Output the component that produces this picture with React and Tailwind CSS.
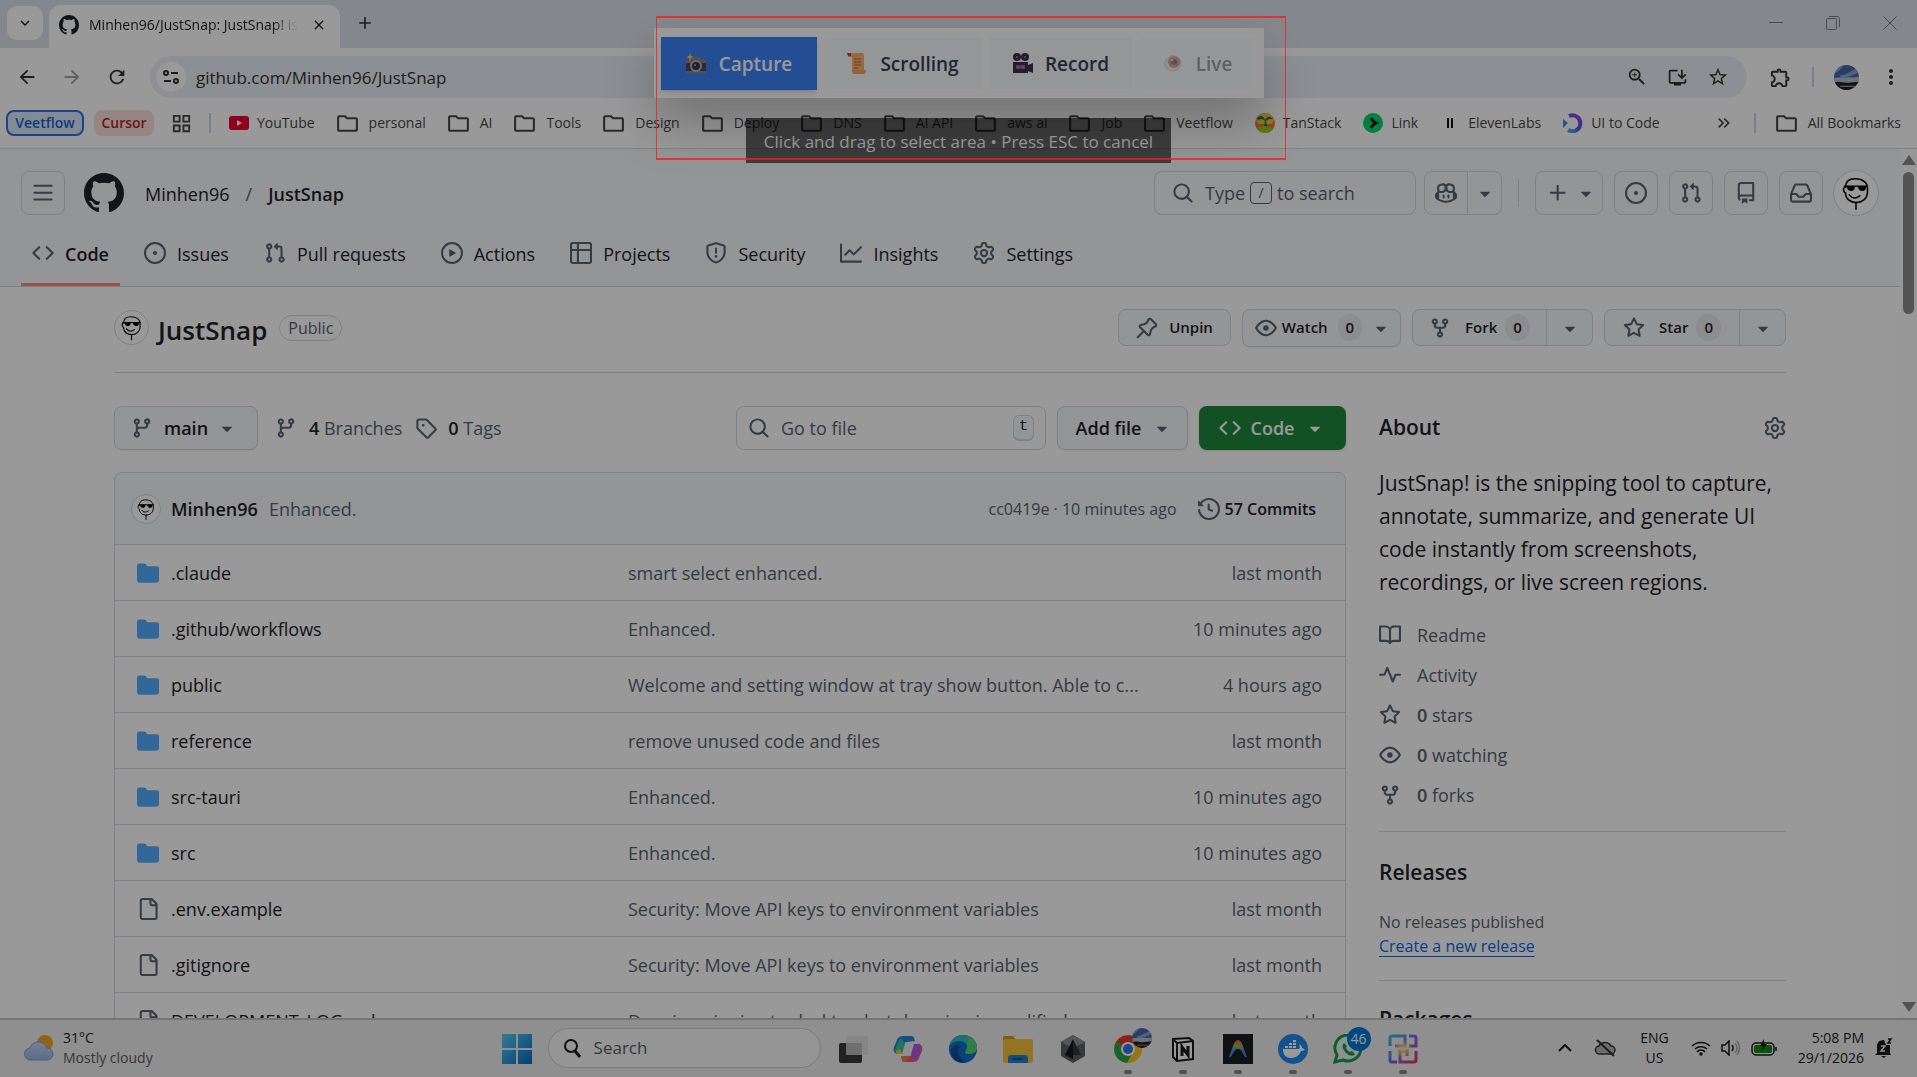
import {
  MdAdd,
  MdArrowBack,
  MdArrowForward,
  MdClose,
  MdExpandMore,
  MdGridView,
  MdInstallDesktop,
  MdKeyboardDoubleArrowRight,
  MdMoreVert,
  MdOutlineExtension,
  MdOutlineFolder,
  MdRefresh,
  MdStarBorder,
  MdZoomIn,
} from 'react-icons/md'

const paths = {
  code: 'm11.28 3.22 4.25 4.25a.75.75 0 0 1 0 1.06l-4.25 4.25a.749.749 0 0 1-1.275-.326.749.749 0 0 1 .215-.734L13.94 8l-3.72-3.72a.749.749 0 0 1 .326-1.275.749.749 0 0 1 .734.215Zm-6.56 0a.751.751 0 0 1 1.042.018.751.751 0 0 1 .018 1.042L2.06 8l3.72 3.72a.749.749 0 0 1-.326 1.275.749.749 0 0 1-.734-.215L.47 8.53a.75.75 0 0 1 0-1.06Z',
  issue: 'M8 9.5a1.5 1.5 0 1 0 0-3 1.5 1.5 0 0 0 0 3ZM8 0a8 8 0 1 1 0 16A8 8 0 0 1 8 0ZM1.5 8a6.5 6.5 0 1 0 13 0 6.5 6.5 0 0 0-13 0Z',
  pull: 'M1.5 3.25a2.25 2.25 0 1 1 3 2.122v5.256a2.251 2.251 0 1 1-1.5 0V5.372A2.25 2.25 0 0 1 1.5 3.25Zm5.677-.177L9.573.677A.25.25 0 0 1 10 .854V2.5h1A2.5 2.5 0 0 1 13.5 5v5.628a2.251 2.251 0 1 1-1.5 0V5a1 1 0 0 0-1-1h-1v1.646a.25.25 0 0 1-.427.177L7.177 3.427a.25.25 0 0 1 0-.354ZM3.75 2.5a.75.75 0 1 0 0 1.5.75.75 0 0 0 0-1.5Zm0 9.5a.75.75 0 1 0 0 1.5.75.75 0 0 0 0-1.5Zm8.25.75a.75.75 0 1 0 1.5 0 .75.75 0 0 0-1.5 0Z',
  play: 'M8 0a8 8 0 1 1 0 16A8 8 0 0 1 8 0ZM1.5 8a6.5 6.5 0 1 0 13 0 6.5 6.5 0 0 0-13 0Zm4.879-2.773 4.264 2.559a.25.25 0 0 1 0 .428l-4.264 2.559A.25.25 0 0 1 6 10.559V5.442a.25.25 0 0 1 .379-.215Z',
  table: 'M0 1.75C0 .784.784 0 1.75 0h12.5C15.216 0 16 .784 16 1.75v12.5A1.75 1.75 0 0 1 14.25 16H1.75A1.75 1.75 0 0 1 0 14.25ZM6.5 6.5v8h7.75a.25.25 0 0 0 .25-.25V6.5Zm8-1.5V1.75a.25.25 0 0 0-.25-.25H6.5V5Zm-13 1.5v7.75c0 .138.112.25.25.25H5v-8ZM5 5V1.5H1.75a.25.25 0 0 0-.25.25V5Z',
  shield: 'M8.533.133a1.75 1.75 0 0 0-1.066 0l-5.25 1.68A1.75 1.75 0 0 0 1 3.48V7c0 1.566.32 3.182 1.303 4.682.983 1.498 2.585 2.813 5.032 3.855a1.697 1.697 0 0 0 1.33 0c2.447-1.042 4.049-2.357 5.032-3.855C14.68 10.182 15 8.566 15 7V3.48a1.75 1.75 0 0 0-1.217-1.667Zm-.61 1.429a.25.25 0 0 1 .153 0l5.25 1.68a.25.25 0 0 1 .174.238V7c0 1.358-.275 2.666-1.057 3.86-.784 1.194-2.121 2.34-4.366 3.297a.196.196 0 0 1-.154 0c-2.245-.956-3.582-2.104-4.366-3.298C2.775 9.666 2.5 8.36 2.5 7V3.48a.25.25 0 0 1 .174-.237ZM8.75 4.75v3a.75.75 0 0 1-1.5 0v-3a.75.75 0 0 1 1.5 0ZM9 10.5a1 1 0 1 1-2 0 1 1 0 0 1 2 0Z',
  graph: 'M1.5 1.75V13.5h13.75a.75.75 0 0 1 0 1.5H.75a.75.75 0 0 1-.75-.75V1.75a.75.75 0 0 1 1.5 0Zm14.28 2.53-5.25 5.25a.75.75 0 0 1-1.06 0L7 7.06 4.28 9.78a.751.751 0 0 1-1.042-.018.751.751 0 0 1-.018-1.042l3.25-3.25a.75.75 0 0 1 1.06 0L10 7.94l4.72-4.72a.751.751 0 0 1 1.042.018.751.751 0 0 1 .018 1.042Z',
  gear: 'M8 0a8.2 8.2 0 0 1 .701.031C9.444.095 9.99.645 10.16 1.29l.288 1.107c.018.066.079.158.212.224.231.114.454.243.668.386.123.082.233.09.299.071l1.103-.303c.644-.176 1.392.021 1.82.63.27.385.506.792.704 1.218.315.675.111 1.422-.364 1.891l-.814.806c-.049.048-.098.147-.088.294.016.257.016.515 0 .772-.01.147.038.246.088.294l.814.806c.475.469.679 1.216.364 1.891a7.977 7.977 0 0 1-.704 1.217c-.428.61-1.176.807-1.82.63l-1.102-.302c-.067-.019-.177-.011-.3.071a5.909 5.909 0 0 1-.668.386c-.133.066-.194.158-.211.224l-.29 1.106c-.168.646-.715 1.196-1.458 1.26a8.006 8.006 0 0 1-1.402 0c-.743-.064-1.289-.614-1.458-1.26l-.289-1.106c-.018-.066-.079-.158-.212-.224a5.738 5.738 0 0 1-.668-.386c-.123-.082-.233-.09-.299-.071l-1.103.303c-.644.176-1.392-.021-1.82-.63a8.12 8.12 0 0 1-.704-1.218c-.315-.675-.111-1.422.363-1.891l.815-.806c.05-.048.098-.147.088-.294a6.214 6.214 0 0 1 0-.772c.01-.147-.038-.246-.088-.294l-.815-.806C.635 6.045.431 5.298.746 4.623a7.92 7.92 0 0 1 .704-1.217c.428-.61 1.176-.807 1.82-.63l1.102.302c.067.019.177.011.3-.071.214-.143.437-.272.668-.386.133-.066.194-.158.211-.224l.29-1.106C6.009.645 6.556.095 7.299.03 7.53.01 7.764 0 8 0Zm-.571 1.525c-.036.003-.108.036-.137.146l-.289 1.105c-.147.561-.549.967-.998 1.189-.173.086-.34.183-.5.29-.417.278-.97.423-1.529.27l-1.103-.303c-.109-.03-.175.016-.195.045-.22.312-.412.644-.573.99-.014.031-.021.11.059.19l.815.806c.411.406.562.957.53 1.456a4.709 4.709 0 0 0 0 .582c.032.499-.119 1.05-.53 1.456l-.815.806c-.081.08-.073.159-.059.19.162.346.353.677.573.989.02.03.085.076.195.046l1.102-.303c.56-.153 1.113-.008 1.53.27.161.107.328.204.501.29.447.222.85.629.997 1.189l.289 1.105c.029.109.101.143.137.146a6.6 6.6 0 0 0 1.142 0c.036-.003.108-.036.137-.146l.289-1.105c.147-.561.549-.967.998-1.189.173-.086.34-.183.5-.29.417-.278.97-.423 1.529-.27l1.103.303c.109.029.175-.016.195-.045.22-.313.411-.644.573-.99.014-.031.021-.11-.059-.19l-.815-.806c-.411-.406-.562-.957-.53-1.456a4.709 4.709 0 0 0 0-.582c-.032-.499.119-1.05.53-1.456l.815-.806c.081-.08.073-.159.059-.19a6.464 6.464 0 0 0-.573-.989c-.02-.03-.085-.076-.195-.046l-1.102.303c-.56.153-1.113.008-1.53-.27a4.44 4.44 0 0 0-.501-.29c-.447-.222-.85-.629-.997-1.189l-.289-1.105c-.029-.11-.101-.143-.137-.146a6.6 6.6 0 0 0-1.142 0ZM11 8a3 3 0 1 1-6 0 3 3 0 0 1 6 0ZM9.5 8a1.5 1.5 0 1 0-3.001.001A1.5 1.5 0 0 0 9.5 8Z',
  github: 'M8 0c4.42 0 8 3.58 8 8a8.013 8.013 0 0 1-5.45 7.59c-.4.08-.55-.17-.55-.38 0-.27.01-1.13.01-2.2 0-.75-.25-1.23-.54-1.48 1.78-.2 3.65-.88 3.65-3.95 0-.88-.31-1.59-.82-2.15.08-.2.36-1.02-.08-2.12 0 0-.67-.22-2.2.82-.64-.18-1.32-.27-2-.27-.68 0-1.36.09-2 .27-1.53-1.03-2.2-.82-2.2-.82-.44 1.1-.16 1.92-.08 2.12-.51.56-.82 1.28-.82 2.15 0 3.06 1.86 3.75 3.64 3.95-.23.2-.44.55-.51 1.07-.46.21-1.61.55-2.33-.66-.15-.24-.6-.83-1.23-.82-.67.01-.27.38.01.53.34.19.73.9.82 1.13.16.45.68 1.31 2.69.94 0 .67.01 1.3.01 1.49 0 .21-.15.45-.55.38A7.995 7.995 0 0 1 0 8c0-4.42 3.58-8 8-8Z',
  search: 'M10.68 11.74a6 6 0 0 1-7.922-8.982 6 6 0 0 1 8.982 7.922l3.04 3.04a.749.749 0 0 1-.326 1.275.749.749 0 0 1-.734-.215ZM11.5 7a4.499 4.499 0 1 0-8.997 0A4.499 4.499 0 0 0 11.5 7Z',
  copilot: 'M7.998 15.035c-4.562 0-7.873-2.914-7.998-3.749V9.338c.085-.628.677-1.686 1.588-2.065.013-.07.024-.143.036-.218.029-.183.06-.384.126-.612-.201-.508-.254-1.084-.254-1.656 0-.87.128-1.769.693-2.484.579-.733 1.494-1.124 2.724-1.261 1.206-.134 2.262.034 2.944.765.05.053.096.108.139.165.044-.057.094-.112.143-.165.682-.731 1.738-.899 2.944-.765 1.23.137 2.145.528 2.724 1.261.566.715.693 1.614.693 2.484 0 .572-.053 1.148-.254 1.656.066.228.098.429.126.612.012.076.024.148.037.218.924.385 1.522 1.471 1.591 2.095v1.872c0 .766-3.351 3.795-8.002 3.795Zm0-1.485c2.28 0 4.584-1.11 5.002-1.433V7.862l-.023-.116c-.49.21-1.075.291-1.727.291-1.146 0-2.059-.327-2.71-.991A3.222 3.222 0 0 1 8 6.303a3.24 3.24 0 0 1-.544.743c-.65.664-1.563.991-2.71.991-.652 0-1.236-.081-1.727-.291l-.023.116v4.255c.419.323 2.722 1.433 5.002 1.433ZM6.762 2.83c-.193-.206-.637-.413-1.682-.297-1.019.113-1.479.404-1.713.7-.247.312-.369.789-.369 1.554 0 .793.129 1.171.308 1.371.162.181.519.379 1.442.379.853 0 1.339-.235 1.638-.54.315-.322.527-.827.617-1.553.117-.935-.037-1.395-.241-1.614Zm4.155-.297c-1.044-.116-1.488.091-1.681.297-.204.219-.359.679-.242 1.614.091.726.303 1.231.618 1.553.299.305.784.54 1.638.54.922 0 1.28-.198 1.442-.379.179-.2.308-.578.308-1.371 0-.765-.123-1.242-.37-1.554-.233-.296-.693-.587-1.713-.7ZM6.25 9.037a.75.75 0 0 1 .75.75v1.501a.75.75 0 0 1-1.5 0V9.787a.75.75 0 0 1 .75-.75Zm4.25.75v1.501a.75.75 0 0 1-1.5 0V9.787a.75.75 0 0 1 1.5 0Z',
  caret: 'm4.427 7.427 3.396 3.396a.25.25 0 0 0 .354 0l3.396-3.396A.25.25 0 0 0 11.396 7H4.604a.25.25 0 0 0-.177.427Z',
  plus: 'M7.75 2a.75.75 0 0 1 .75.75V7h4.25a.75.75 0 0 1 0 1.5H8.5v4.25a.75.75 0 0 1-1.5 0V8.5H2.75a.75.75 0 0 1 0-1.5H7V2.75A.75.75 0 0 1 7.75 2Z',
  menu: 'M1 2.75A.75.75 0 0 1 1.75 2h12.5a.75.75 0 0 1 0 1.5H1.75A.75.75 0 0 1 1 2.75Zm0 5A.75.75 0 0 1 1.75 7h12.5a.75.75 0 0 1 0 1.5H1.75A.75.75 0 0 1 1 7.75ZM1.75 12h12.5a.75.75 0 0 1 0 1.5H1.75a.75.75 0 0 1 0-1.5Z',
  repo: 'M2 2.5A2.5 2.5 0 0 1 4.5 0h8.75a.75.75 0 0 1 .75.75v12.5a.75.75 0 0 1-.75.75h-2.5a.75.75 0 0 1 0-1.5h1.75v-2h-8a1 1 0 0 0-.714 1.7.75.75 0 1 1-1.072 1.05A2.495 2.495 0 0 1 2 11.5Zm10.5-1h-8a1 1 0 0 0-1 1v6.708A2.486 2.486 0 0 1 4.5 9h8ZM5 12.25a.25.25 0 0 1 .25-.25h3.5a.25.25 0 0 1 .25.25v3.25a.25.25 0 0 1-.4.2l-1.45-1.087a.249.249 0 0 0-.3 0L5.4 15.7a.25.25 0 0 1-.4-.2Z',
  inbox: 'M2.8 2.06A1.75 1.75 0 0 1 4.41 1h7.18c.7 0 1.333.417 1.61 1.06l2.74 6.395c.04.093.06.194.06.295v4.5A1.75 1.75 0 0 1 14.25 15H1.75A1.75 1.75 0 0 1 0 13.25v-4.5c0-.101.02-.202.06-.295Zm1.61.44a.25.25 0 0 0-.23.152L1.887 8H4.75a.75.75 0 0 1 .6.3L6.625 10h2.75l1.275-1.7a.75.75 0 0 1 .6-.3h2.863L11.82 2.652a.25.25 0 0 0-.23-.152Zm10.09 7h-2.875l-1.275 1.7a.75.75 0 0 1-.6.3h-3.5a.75.75 0 0 1-.6-.3L4.375 9.5H1.5v3.75c0 .138.112.25.25.25h12.5a.25.25 0 0 0 .25-.25Z',
  pin: 'm11.294.984 3.722 3.722a1.75 1.75 0 0 1-.504 2.826l-1.327.613a3.089 3.089 0 0 0-1.707 2.084l-.584 2.454c-.317 1.332-1.972 1.8-2.94.832L5.75 11.311 1.78 15.28a.749.749 0 1 1-1.06-1.06l3.969-3.97-2.204-2.204c-.968-.968-.5-2.623.832-2.94l2.454-.584a3.08 3.08 0 0 0 2.084-1.707l.613-1.327a1.75 1.75 0 0 1 2.826-.504ZM6.283 9.723l2.732 2.731a.25.25 0 0 0 .42-.119l.584-2.454a4.586 4.586 0 0 1 2.537-3.098l1.328-.613a.25.25 0 0 0 .072-.404l-3.722-3.722a.25.25 0 0 0-.404.072l-.613 1.328a4.584 4.584 0 0 1-3.098 2.537l-2.454.584a.25.25 0 0 0-.119.42l2.731 2.732Z',
  eye: 'M8 2c1.981 0 3.671.992 4.933 2.078 1.27 1.091 2.187 2.345 2.637 3.023a1.62 1.62 0 0 1 0 1.798c-.45.678-1.367 1.932-2.637 3.023C11.67 13.008 9.981 14 8 14c-1.981 0-3.671-.992-4.933-2.078C1.797 10.83.88 9.576.43 8.898a1.62 1.62 0 0 1 0-1.798c.45-.677 1.367-1.931 2.637-3.022C4.33 2.992 6.019 2 8 2ZM1.679 7.932a.12.12 0 0 0 0 .136c.411.622 1.241 1.75 2.366 2.717C5.176 11.758 6.527 12.5 8 12.5c1.473 0 2.825-.742 3.955-1.715 1.124-.967 1.954-2.096 2.366-2.717a.12.12 0 0 0 0-.136c-.412-.621-1.242-1.75-2.366-2.717C10.824 4.242 9.473 3.5 8 3.5c-1.473 0-2.825.742-3.955 1.715-1.124.967-1.954 2.096-2.366 2.717ZM8 10a2 2 0 1 1-.001-3.999A2 2 0 0 1 8 10Z',
  fork: 'M5 5.372v.878c0 .414.336.75.75.75h4.5a.75.75 0 0 0 .75-.75v-.878a2.25 2.25 0 1 1 1.5 0v.878a2.25 2.25 0 0 1-2.25 2.25h-1.5v2.128a2.251 2.251 0 1 1-1.5 0V8.5h-1.5A2.25 2.25 0 0 1 3.5 6.25v-.878a2.25 2.25 0 1 1 1.5 0ZM5 3.25a.75.75 0 1 0-1.5 0 .75.75 0 0 0 1.5 0Zm6.75.75a.75.75 0 1 0 0-1.5.75.75 0 0 0 0 1.5Zm-3 8.75a.75.75 0 1 0-1.5 0 .75.75 0 0 0 1.5 0Z',
  star: 'M8 .25a.75.75 0 0 1 .673.418l1.882 3.815 4.21.612a.75.75 0 0 1 .416 1.279l-3.046 2.97.719 4.192a.751.751 0 0 1-1.088.791L8 12.347l-3.766 1.98a.75.75 0 0 1-1.088-.79l.72-4.194L.818 6.374a.75.75 0 0 1 .416-1.28l4.21-.611L7.327.668A.75.75 0 0 1 8 .25Zm0 2.445L6.615 5.5a.75.75 0 0 1-.564.41l-3.097.45 2.24 2.184a.75.75 0 0 1 .216.664l-.528 3.084 2.769-1.456a.75.75 0 0 1 .698 0l2.77 1.456-.53-3.084a.75.75 0 0 1 .216-.664l2.24-2.183-3.096-.45a.75.75 0 0 1-.564-.41L8 2.694Z',
  branch: 'M9.5 3.25a2.25 2.25 0 1 1 3 2.122V6A2.5 2.5 0 0 1 10 8.5H6a1 1 0 0 0-1 1v1.128a2.251 2.251 0 1 1-1.5 0V5.372a2.25 2.25 0 1 1 1.5 0v1.836A2.493 2.493 0 0 1 6 7h4a1 1 0 0 0 1-1v-.628A2.25 2.25 0 0 1 9.5 3.25Zm-6 0a.75.75 0 1 0 1.5 0 .75.75 0 0 0-1.5 0Zm8.25-.75a.75.75 0 1 0 0 1.5.75.75 0 0 0 0-1.5ZM4.25 12a.75.75 0 1 0 0 1.5.75.75 0 0 0 0-1.5Z',
  tag: 'M1 7.775V2.75C1 1.784 1.784 1 2.75 1h5.025c.464 0 .91.184 1.238.513l6.25 6.25a1.75 1.75 0 0 1 0 2.474l-5.026 5.026a1.75 1.75 0 0 1-2.474 0l-6.25-6.25A1.752 1.752 0 0 1 1 7.775Zm1.5 0c0 .066.026.13.073.177l6.25 6.25a.25.25 0 0 0 .354 0l5.025-5.025a.25.25 0 0 0 0-.354l-6.25-6.25a.25.25 0 0 0-.177-.073H2.75a.25.25 0 0 0-.25.25ZM6 5a1 1 0 1 1 0 2 1 1 0 0 1 0-2Z',
  folder: 'M1.75 1A1.75 1.75 0 0 0 0 2.75v10.5C0 14.216.784 15 1.75 15h12.5A1.75 1.75 0 0 0 16 13.25v-8.5A1.75 1.75 0 0 0 14.25 3H7.5a.25.25 0 0 1-.2-.1l-.9-1.2C6.07 1.26 5.55 1 5 1H1.75Z',
  file: 'M2 1.75C2 .784 2.784 0 3.75 0h6.586c.464 0 .909.184 1.237.513l2.914 2.914c.329.328.513.773.513 1.237v9.586A1.75 1.75 0 0 1 13.25 16h-9.5A1.75 1.75 0 0 1 2 14.25Zm1.75-.25a.25.25 0 0 0-.25.25v12.5c0 .138.112.25.25.25h9.5a.25.25 0 0 0 .25-.25V6h-2.75A1.75 1.75 0 0 1 9 4.25V1.5Zm6.75.062V4.25c0 .138.112.25.25.25h2.688l-.011-.013-2.914-2.914-.013-.011Z',
  history: 'm.427 1.927 1.215 1.215a8.002 8.002 0 1 1-1.6 5.685.75.75 0 1 1 1.493-.154 6.5 6.5 0 1 0 1.18-4.458l1.358 1.358A.25.25 0 0 1 3.896 6H.25A.25.25 0 0 1 0 5.75V2.104a.25.25 0 0 1 .427-.177ZM7.75 4a.75.75 0 0 1 .75.75v2.992l2.028.812a.75.75 0 0 1-.557 1.392l-2.5-1A.751.751 0 0 1 7 8.25v-3.5A.75.75 0 0 1 7.75 4Z',
  book: 'M0 1.75A.75.75 0 0 1 .75 1h4.253c1.227 0 2.317.59 3 1.501A3.743 3.743 0 0 1 11.006 1h4.245a.75.75 0 0 1 .75.75v10.5a.75.75 0 0 1-.75.75h-4.507a2.25 2.25 0 0 0-1.591.659l-.622.621a.75.75 0 0 1-1.06 0l-.622-.621A2.25 2.25 0 0 0 5.258 13H.75a.75.75 0 0 1-.75-.75Zm7.251 10.324.004-5.073-.002-2.253A2.25 2.25 0 0 0 5.003 2.5H1.5v9h3.757a3.75 3.75 0 0 1 1.994.574ZM8.755 4.75l-.004 7.322a3.752 3.752 0 0 1 1.992-.572H14.5v-9h-3.495a2.25 2.25 0 0 0-2.25 2.25Z',
  pulse: 'M6 2c.306 0 .582.187.696.471L10 10.731l1.304-3.26A.751.751 0 0 1 12 7h3.25a.75.75 0 0 1 0 1.5h-2.742l-1.812 4.528a.751.751 0 0 1-1.392 0L6 4.77 4.696 8.03A.75.75 0 0 1 4 8.5H.75a.75.75 0 0 1 0-1.5h2.742l1.812-4.529A.751.751 0 0 1 6 2Z',
}

function Icon({ name, className = 'size-[22px] text-[#59636e]' }) {
  return (
    <svg viewBox="0 0 16 16" fill="currentColor" fillRule="evenodd" aria-hidden="true" className={`shrink-0 ${className}`}>
      <path d={paths[name]} />
    </svg>
  )
}

function Avatar({ className }) {
  return (
    <span className={`flex shrink-0 rounded-full border border-[#d1d9e0] bg-white ${className}`}>
      <svg viewBox="0 0 46 46" fill="none" stroke="#000" strokeWidth="1.6" strokeLinecap="round" className="size-full">
        <path d="M12 17c0-6 4-9 10-9 8 0 13 4 13 10v4c0 7-6 11-12 11s-11-4-11-10c-2-1-3-4-1-6ZM23 33v7M16 25c3 4 7 4 11 1" />
        <path d="M11 16h24" />
        <path d="M13 16h9c0 4-2 5-4 5s-4-1-5-5ZM25 16h9c-1 4-2 5-4 5s-5-1-5-5Z" fill="#000" stroke="none" />
      </svg>
    </span>
  )
}

function SkyPhoto({ className }) {
  return (
    <svg viewBox="0 0 24 24" aria-hidden="true" className={`shrink-0 rounded-full ${className}`}>
      <rect width="24" height="24" fill="#4468ac" />
      <path d="M0 8c5-1 6-5 10-8H0ZM6 10c6-1 10-4 16-7l2 4c-6 3-12 5-18 6Z" fill="#8ba3cd" />
      <path d="M0 13c3-2 6 0 9-1 5-1 10 1 15-1v8H0Z" fill="#b5bfd2" />
      <path d="M0 17c4-2 8 0 12 0s8-1 12-1v8H0Z" fill="#25211f" />
      <path d="M6 20h15v1H6Z" fill="#9b9792" />
    </svg>
  )
}

/* ---------- browser window ---------- */

function TabStrip() {
  return (
    <div className="flex h-12 items-end bg-[#dde3ea] text-[#1f1f1f]">
      <button aria-label="Search tabs" className="mb-2 ml-[7px] flex h-[34px] w-9 items-center justify-center rounded-[10px] bg-white">
        <MdExpandMore className="size-[18px]" />
      </button>
      <div className="ml-[6px] flex h-[43px] w-[291px] items-center rounded-t-xl bg-white px-[10px] pb-1">
        <Icon name="github" className="size-5 text-[#1f2328]" />
        <span className="ml-[10px] w-[209px] overflow-hidden text-sm whitespace-nowrap [mask-image:linear-gradient(to_right,#000_88%,transparent)]">
          Minhen96/JustSnap: JustSnap! is
        </span>
        <button aria-label="Close tab" className="ml-[13px]">
          <MdClose className="size-4" />
        </button>
      </div>
      <button aria-label="New tab" className="mb-[15px] ml-[15px]">
        <MdAdd className="size-5 text-[#333]" />
      </button>
      <div className="mr-5 mb-[18px] ml-auto flex gap-[43px] text-[#7c8085]">
        <button aria-label="Minimize">
          <svg viewBox="0 0 14 14" className="size-[14px]" fill="none" stroke="currentColor"><path d="M0 6.5h14" /></svg>
        </button>
        <button aria-label="Restore">
          <svg viewBox="0 0 14 14" className="size-[14px]" fill="none" stroke="currentColor"><rect x=".5" y="2.500" width="10" height="11" rx="1" /><path d="M3 .5h8a2.500 2.500 0 0 1 2.500 2.500v8" /></svg>
        </button>
        <button aria-label="Close">
          <svg viewBox="0 0 14 14" className="size-[14px]" fill="none" stroke="currentColor"><path d="m.5.5 13 13M13.500.5l-13 13" /></svg>
        </button>
      </div>
    </div>
  )
}

function AddressBar() {
  return (
    <div className="flex h-[58px] items-center bg-white pr-[14px] pl-4 text-[#333]">
      <button aria-label="Back"><MdArrowBack className="size-[22px]" /></button>
      <button aria-label="Forward" className="ml-[23px]"><MdArrowForward className="size-[22px] text-[#a0a0a0]" /></button>
      <button aria-label="Reload" className="ml-[23px]"><MdRefresh className="size-[22px]" /></button>
      <div className="ml-[22px] flex h-[42px] flex-1 items-center rounded-full bg-[#e9eef6] pr-[18px] pl-[6px]">
        <button aria-label="Site information" className="flex size-[30px] items-center justify-center rounded-full bg-white">
          <svg viewBox="0 0 16 16" className="size-4" fill="none" stroke="currentColor" strokeWidth="2">
            <circle cx="3" cy="4" r="2" /><path d="M8 4h7M1 12h7" /><circle cx="13" cy="12" r="2" />
          </svg>
        </button>
        <input aria-label="Address" defaultValue="github.com/Minhen96/JustSnap" className="ml-[10px] min-w-0 flex-1 bg-transparent pt-[2px] text-[17px] outline-none" />
        <div className="flex items-center gap-[19px]">
          <button aria-label="Zoom"><MdZoomIn className="size-[22px]" /></button>
          <button aria-label="Install app"><MdInstallDesktop className="size-[21px]" /></button>
          <button aria-label="Bookmark this page"><MdStarBorder className="size-[22px]" /></button>
        </div>
      </div>
      <button aria-label="Extensions" className="ml-[22px]"><MdOutlineExtension className="size-[23px]" /></button>
      <span className="ml-5 h-5 w-[2px] bg-[#c7d6ec]" />
      <button aria-label="Profile" className="ml-5"><SkyPhoto className="size-[25px]" /></button>
      <button aria-label="Menu" className="ml-5"><MdMoreVert className="size-6" /></button>
    </div>
  )
}

const bookmarkIcons = {
  folder: <MdOutlineFolder className="mr-[1px] -ml-[2px] size-[25px] shrink-0 text-[#474747]" />,
  youtube: (
    <svg viewBox="0 0 20 20" className="size-5"><rect y="3" width="20" height="14" rx="3" fill="#f00033" /><path d="m8 7 5 3-5 3Z" fill="#fff" /></svg>
  ),
  tanstack: (
    <svg viewBox="0 0 20 20" className="size-5">
      <circle cx="10" cy="10" r="10" fill="#ee7a2c" />
      <path d="M1 6a10 10 0 0 1 18 0l-2 5H3Z" fill="#f6c945" />
      <path d="M2 5c4-4 7-1 8 2 2-4 6-4 8-1-3 0-5 0-7 2l1 6H9l1-6C8 6 5 5 3 8Z" fill="#1c7a45" />
      <path d="M2 16c4-4 12-4 16 0a10 10 0 0 1-16 0Z" fill="#9ccc2e" />
    </svg>
  ),
  link: (
    <svg viewBox="0 0 20 20" className="size-5"><circle cx="10" cy="10" r="10" fill="#00d66f" /><path d="M8 5c1 3 3 4 5 5-2 1-4 2-5 5" fill="none" stroke="#0b1f14" strokeWidth="3" /></svg>
  ),
  eleven: (
    <svg viewBox="0 0 20 20" className="size-5"><path d="M7 5h2v10H7ZM11 5h2v10h-2Z" fill="#111" /></svg>
  ),
  uicode: (
    <svg viewBox="0 0 20 20" className="size-5">
      <defs>
        <linearGradient id="uic" x1="0" y1="1" x2="1" y2="0"><stop stopColor="#38bdf8" /><stop offset=".5" stopColor="#4f5bf0" /><stop offset="1" stopColor="#a63ae0" /></linearGradient>
      </defs>
      <path d="M6 3a8 8 0 1 1-1 14" fill="none" stroke="url(#uic)" strokeWidth="4" /><path d="m0 6 5 4-5 5Z" fill="#4a8be0" />
    </svg>
  ),
}

const bookmarks = [
  ['youtube', 'YouTube'],
  ['folder', 'personal'],
  ['folder', 'AI'],
  ['folder', 'Tools'],
  ['folder', 'Design'],
  ['folder', 'Deploy'],
  ['folder', 'DNS'],
  ['folder', 'AI API'],
  ['folder', 'aws ai'],
  ['folder', 'Job'],
  ['folder', 'Veetflow'],
  ['tanstack', 'TanStack'],
  ['link', 'Link'],
  ['eleven', 'ElevenLabs'],
  ['uicode', 'UI to Code'],
]

function BookmarksBar() {
  return (
    <div className="flex h-[43px] items-center border-b border-[#d5d8dc] bg-white pb-2 pl-[6px] text-sm whitespace-nowrap text-[#474747]">
      <button className="h-[26px] w-[78px] rounded-lg border-2 border-[#2f72dc] bg-[#dbe7fc] font-semibold text-[#1b5fc9]">Veetflow</button>
      <button className="ml-[10px] h-[26px] w-[60px] rounded-lg bg-[#f9dedc] font-semibold text-[#b3261e]">Cursor</button>
      <button aria-label="Apps" className="ml-4"><MdGridView className="size-[23px]" /></button>
      <span className="ml-4 h-5 w-[2px] bg-[#c7d6ec]" />
      <nav className="ml-[18px] flex items-center gap-[22px]">
        {bookmarks.map(([icon, label]) => (
          <a key={label + icon} href="#" className="flex items-center gap-2">
            {bookmarkIcons[icon]}
            {label}
          </a>
        ))}
      </nav>
      <button aria-label="More bookmarks" className="ml-auto"><MdKeyboardDoubleArrowRight className="size-5" /></button>
      <span className="mx-5 h-5 w-[2px] bg-[#c7d6ec]" />
      <a href="#" className="mr-4 flex items-center gap-2">
        {bookmarkIcons.folder}
        All Bookmarks
      </a>
    </div>
  )
}

/* ---------- repository page ---------- */

const repoTabs = [
  ['code', 'Code'],
  ['issue', 'Issues'],
  ['pull', 'Pull requests'],
  ['play', 'Actions'],
  ['table', 'Projects'],
  ['shield', 'Security'],
  ['graph', 'Insights'],
  ['gear', 'Settings'],
]

function SquareButton({ label, icon }) {
  return (
    <button aria-label={label} className="flex size-11 items-center justify-center rounded-lg border border-[#d1d9e0]">
      <Icon name={icon} />
    </button>
  )
}

function RepoHeader() {
  return (
    <header className="border-b border-[#d1d9e0] bg-[#f6f8fa] pt-[22px] pr-[21px] pl-[21px] text-lg">
      <div className="flex h-11 items-center">
        <SquareButton label="Open menu" icon="menu" />
        <a href="#" aria-label="Homepage" className="ml-[19px]"><Icon name="github" className="size-10 text-[#1f2328]" /></a>
        <nav className="ml-[21px] flex items-center pt-[2px]">
          <a href="#">Minhen96</a>
          <span className="mx-4 text-[#59636e]">/</span>
          <a href="#" className="font-semibold">JustSnap</a>
        </nav>
        <button className="ml-auto flex h-11 w-[262px] items-center rounded-lg border border-[#d1d9e0] px-[17px] text-[#59636e]">
          <Icon name="search" />
          <span className="ml-[11px]">Type</span>
          <kbd className="mx-[5px] flex h-[22px] w-[22px] items-center justify-center rounded border border-[#59636e] font-['Open_Sans',sans-serif] text-sm">/</kbd>
          to search
        </button>
        <div className="ml-2 flex h-11 w-[78px] rounded-lg border border-[#d1d9e0]">
          <button aria-label="Copilot" className="flex w-[43px] items-center justify-center border-r border-[#d1d9e0]"><Icon name="copilot" /></button>
          <button aria-label="Copilot options" className="flex flex-1 items-center justify-center"><Icon name="caret" /></button>
        </div>
        <span className="mx-4 h-7 w-px bg-[#d1d9e0]" />
        <button aria-label="Create new" className="mr-[11px] flex h-11 w-[68px] items-center justify-center gap-[6px] rounded-lg border border-[#d1d9e0] pl-[6px]">
          <Icon name="plus" />
          <Icon name="caret" />
        </button>
        <div className="flex items-center gap-[11px]">
          <SquareButton label="Issues" icon="issue" />
          <SquareButton label="Pull requests" icon="pull" />
          <SquareButton label="Repositories" icon="repo" />
          <SquareButton label="Notifications" icon="inbox" />
        </div>
        <button aria-label="Account" className="ml-[10px]"><Avatar className="size-[46px]" /></button>
      </div>
      <nav className="mt-4 flex gap-[13px]">
        {repoTabs.map(([icon, label], i) => (
          <a key={label} href="#" className={i === 0 ? 'border-b-[3px] border-[#fd8c73] pb-2 font-semibold' : 'border-b-[3px] border-transparent pb-2'}>
            <span className="flex h-11 items-center gap-[11px] px-[11px]">
              <Icon name={icon} />
              <span className="pt-[2px]">{label}</span>
            </span>
          </a>
        ))}
      </nav>
    </header>
  )
}

function SplitButton({ icon, label, className }) {
  return (
    <div className={`flex h-[37px] rounded-lg border border-[#d1d9e0] bg-[#f6f8fa] ${className}`}>
      <button className="flex flex-1 items-center justify-center border-r border-[#d1d9e0]">
        <Icon name={icon} />
        <span className="ml-[14px]">{label}</span>
        <span className="ml-2 rounded-full bg-[#e8ebee] px-2 py-[2px]">0</span>
      </button>
      <button aria-label={`${label} options`} className="flex w-[45px] items-center justify-center"><Icon name="caret" /></button>
    </div>
  )
}

function TitleRow() {
  return (
    <div className="flex h-[86px] items-center border-b border-[#d1d9e0] pb-1">
      <Avatar className="size-[35px]" />
      <h1 className="ml-[9px] pt-1 text-[26px] leading-9 font-semibold">JustSnap</h1>
      <span className="ml-3 rounded-full border border-[#d1d9e0] px-2 text-[16px] leading-6 text-[#59636e]">Public</span>
      <div className="ml-auto flex items-center gap-[11px] text-[15px] font-semibold">
        <button className="flex h-[37px] w-[113px] items-center justify-center gap-[11px] rounded-lg border border-[#d1d9e0] bg-[#f6f8fa]">
          <Icon name="pin" />
          Unpin
        </button>
        <button className="flex h-[38px] w-[159px] items-center justify-center rounded-lg border border-[#d1d9e0] bg-[#f6f8fa] pl-1 shadow-xs">
          <Icon name="eye" />
          <span className="ml-[5px]">Watch</span>
          <span className="mr-2 ml-[10px] rounded-full bg-[#e8ebee] px-2 py-[2px]">0</span>
          <Icon name="caret" />
        </button>
        <SplitButton icon="fork" label="Fork" className="w-[181px]" />
        <SplitButton icon="star" label="Star" className="w-[182px]" />
      </div>
    </div>
  )
}

function FileToolbar() {
  return (
    <div className="flex h-11 items-center text-[18px] font-semibold">
      <button className="flex h-11 w-[144px] items-center rounded-lg border border-[#d1d9e0] bg-[#f6f8fa] pl-4 shadow-xs">
        <Icon name="branch" />
        <span className="ml-[11px]">main</span>
        <Icon name="caret" className="ml-2 size-[22px] text-[#59636e]" />
      </button>
      <a href="#" className="ml-[17px] flex items-center">
        <Icon name="branch" />
        <span className="ml-3">4 <span className="font-medium text-[#59636e]">Branches</span></span>
      </a>
      <a href="#" className="ml-[13px] flex items-center">
        <Icon name="tag" />
        <span className="ml-[11px]">0 <span className="font-medium text-[#59636e]">Tags</span></span>
      </a>
      <label className="ml-auto flex h-11 w-[310px] items-center rounded-lg border border-[#d1d9e0] px-[11px] font-normal">
        <Icon name="search" />
        <input aria-label="Go to file" placeholder="Go to file" className="ml-[11px] w-full min-w-0 bg-transparent outline-none placeholder:text-[#59636e]" />
        <kbd className="flex h-[26px] w-[21px] shrink-0 items-center justify-center rounded-md border border-b-2 border-[#d1d9e0] bg-[#f6f8fa] font-['Liberation_Mono',monospace] text-[15px]">t</kbd>
      </label>
      <button className="ml-[11px] flex h-11 w-[131px] items-center justify-center gap-[10px] rounded-lg border border-[#d1d9e0] bg-[#f6f8fa] pl-1 shadow-xs">
        Add file
        <Icon name="caret" />
      </button>
      <button className="ml-[11px] flex h-11 w-[147px] items-center justify-center gap-[10px] rounded-lg bg-[#1f883d] text-white shadow-sm">
        <Icon name="code" className="size-[22px]" />
        Code
        <Icon name="caret" className="size-[22px]" />
      </button>
    </div>
  )
}

const files = [
  ['folder', '.claude', 'smart select enhanced.', 'last month'],
  ['folder', '.github/workflows', 'Enhanced.', '10 minutes ago'],
  ['folder', 'public', 'Welcome and setting window at tray show button. Able to c...', '4 hours ago'],
  ['folder', 'reference', 'remove unused code and files', 'last month'],
  ['folder', 'src-tauri', 'Enhanced.', '10 minutes ago'],
  ['folder', 'src', 'Enhanced.', '10 minutes ago'],
  ['file', '.env.example', 'Security: Move API keys to environment variables', 'last month'],
  ['file', '.gitignore', 'Security: Move API keys to environment variables', 'last month'],
  ['file', 'DEVELOPMENT_LOG.md', 'Drawing pinning to desktop but dragging is modified', 'last month'],
]

function FileList() {
  return (
    <div className="mt-[22px] rounded-lg border border-[#d1d9e0] text-[18px]">
      <div className="flex h-[71px] items-center rounded-t-lg bg-[#f6f8fa] pr-[29px] pl-4">
        <Avatar className="size-[30px]" />
        <a href="#" className="ml-[10px] pt-[2px] font-semibold">Minhen96</a>
        <a href="#" className="ml-[11px] pt-[2px] text-[#59636e]">Enhanced.</a>
        <span className="ml-auto text-[16px] text-[#59636e]">cc0419e · 10 minutes ago</span>
        <a href="#" className="ml-[21px] flex items-center gap-[5px] text-[16px] font-semibold">
          <Icon name="history" />
          57 Commits
        </a>
      </div>
      <table className="w-full table-fixed text-left">
        <tbody>
          {files.map(([kind, name, message, date]) => (
            <tr key={name} className="h-14 border-t border-[#d1d9e0]">
              <td className="w-[513px] pl-[22px]">
                <a href="#" className="flex items-center gap-3">
                  <Icon name={kind} className={kind === 'folder' ? 'size-[22px] text-[#54aeff]' : 'size-[22px] text-[#59636e]'} />
                  <span className="pt-[2px]">{name}</span>
                </a>
              </td>
              <td className="pt-[2px] whitespace-nowrap text-[#59636e]"><a href="#">{message}</a></td>
              <td className="w-[170px] pt-[2px] pr-[23px] text-right whitespace-nowrap text-[#59636e]">{date}</td>
            </tr>
          ))}
        </tbody>
      </table>
    </div>
  )
}

const facts = [
  ['book', null, 'Readme'],
  ['pulse', null, 'Activity'],
  ['star', '0', 'stars'],
  ['eye', '0', 'watching'],
  ['fork', '0', 'forks'],
]

function Sidebar() {
  return (
    <aside className="w-[407px] shrink-0">
      <div className="flex h-11 items-center justify-between">
        <h2 className="text-[21px] font-semibold">About</h2>
        <button aria-label="Edit repository details"><Icon name="gear" /></button>
      </div>
      <p className="mt-[17px] text-[21px] leading-[33px]">
        JustSnap! is the snipping tool to capture, annotate, summarize, and generate UI code instantly from screenshots, recordings, or live screen regions.
      </p>
      <ul className="mt-4 border-b border-[#d1d9e0] pb-4 text-[18px] text-[#59636e]">
        {facts.map(([icon, count, label]) => (
          <li key={label} className="h-10">
            <a href="#" className="flex h-full items-center gap-4">
              <Icon name={icon} />
              <span>{count && <b className="font-semibold">{count} </b>}{label}</span>
            </a>
          </li>
        ))}
      </ul>
      <section className="border-b border-[#d1d9e0] pt-6 pb-[22px] text-[16px] leading-6">
        <h2 className="mb-[22px] text-[21px] leading-8 font-semibold">Releases</h2>
        <p className="text-[#59636e]">No releases published</p>
        <a href="#" className="text-[#0969da] underline underline-offset-4">Create a new release</a>
      </section>
      <h2 className="pt-[22px] text-[21px] leading-8 font-semibold">Packages</h2>
    </aside>
  )
}

function Scrollbar() {
  return (
    <div aria-hidden="true" className="flex w-[17px] shrink-0 flex-col items-center bg-[#fcfcfc] py-[6px]">
      <svg viewBox="0 0 14 10" className="h-[10px] w-[14px]"><path d="M7 0 14 10H0Z" fill="#8b8b8b" /></svg>
      <span className="mt-[7px] h-[142px] w-[11px] rounded-full bg-[#8b8b8b]" />
      <svg viewBox="0 0 14 10" className="mt-auto h-[10px] w-[14px]"><path d="M7 10 0 0h14Z" fill="#8b8b8b" /></svg>
    </div>
  )
}

/* ---------- taskbar ---------- */

const apps = [
  {
    name: 'Task View',
    art: <><rect x="1" y="9" width="23" height="20" rx="2" fill="#3a3a3a" /><rect x="8" y="2" width="22" height="19" rx="2" fill="#e0e0e0" /><path d="M8 9h16v12H10q-2 0-2-2Z" fill="#b9b9b9" /></>,
  },
  {
    name: 'Copilot',
    art: (
      <>
        <path d="M11 2h7c3 0 3 2 4 5l-8 1c-2 0-3 1-4 4l-2 8H6c-5 0-6-3-5-7l3-7c1-3 3-4 7-4Z" fill="#2a7fe0" />
        <path d="M8 4c-3 3-7 12-5 16h6l3-10Z" fill="#35c3a2" />
        <path d="M3 17c0 3 2 3 4 3h2l-2-5Z" fill="#f3c92f" />
        <path d="M19 28h-7c-3 0-3-2-4-5l8-1c2 0 3-1 4-4l2-8h2c5 0 6 3 5 7l-3 7c-1 3-3 4-7 4Z" fill="#e8588c" />
        <path d="M22 26c3-3 7-12 5-16h-6l-3 10Z" fill="#a85be8" />
        <path d="M8 22h9l-4 6c-3 0-4-2-5-6Z" fill="#f4803c" />
      </>
    ),
  },
  {
    name: 'Edge',
    art: (
      <>
        <circle cx="15" cy="15" r="14" fill="#0f6fc4" />
        <path d="M1 14C2 6 8 1 15 1c8 0 14 5 14 12 0 5-4 7-8 7-3 0-4-1-4-2s2-2 2-5c0-4-4-6-8-6-5 0-9 3-10 7Z" fill="#2fc0b2" />
        <path d="M20 3c6 2 9 6 9 10 0 5-4 7-8 7-3 0-4-1-4-2s2-2 2-5c0-3 2-6 1-10Z" fill="#55cf72" />
        <path d="M12 12c-4 4-2 13 6 16-9 2-15-4-15-10 0-5 5-8 9-6Z" fill="#0b4f9c" />
      </>
    ),
  },
  {
    name: 'File Explorer',
    art: <><path d="M0 4c0-2 1-2 2-2h8l3 4H0Z" fill="#d99a1b" /><rect y="5" width="30" height="24" rx="2" fill="#f3c13a" /><path d="M5 29v-5c0-2 1-3 3-3h14c2 0 3 1 3 3v5Z" fill="#1f7fd0" /><path d="M10 25h10" stroke="#0d4f94" strokeWidth="2" /></>,
  },
  {
    name: 'Cursor',
    art: <><path d="m15 1 12 7v14l-12 7-12-7V8Z" fill="#5b5e63" /><path d="m15 1 12 7-12 6L3 8Z" fill="#8b8e93" /><path d="M15 5v20l-8-4Z" fill="#17181a" /><path d="m15 5 8 16-8 0Z" fill="#34363a" /></>,
  },
  {
    name: 'Chrome',
    running: true,
    photo: true,
    art: (
      <>
        <circle cx="15" cy="15" r="14" fill="#f8c51c" />
        <path d="M15 15 3 8a14 14 0 0 1 24.500 1H15Z" fill="#e33b2e" />
        <path d="M3 8a14 14 0 0 0 11 21l6-11-5-3Z" fill="#2ba24c" />
        <circle cx="15" cy="15" r="7" fill="#fff" /><circle cx="15" cy="15" r="5" fill="#3374e0" />
      </>
    ),
  },
  {
    name: 'Notion',
    running: true,
    art: (
      <>
        <path d="m5 5 16-1 4 3v18l-16 2-4-4Z" fill="#fff" stroke="#1a1a1a" strokeWidth="2" />
        <path d="M9 9 5 5M9 9l16-2M9 9v17" stroke="#1a1a1a" strokeWidth="2" />
        <path d="M14 22v-9l6 8v-9" fill="none" stroke="#1a1a1a" strokeWidth="3" />
      </>
    ),
  },
  {
    name: 'Antigravity',
    running: true,
    art: (
      <>
        <defs><linearGradient id="arc" x1="0" y1="0" x2="0" y2="1"><stop stopColor="#ee5a3c" /><stop offset=".35" stopColor="#9fb04a" /><stop offset=".6" stopColor="#3f8df2" /><stop offset="1" stopColor="#4a7ff2" /></linearGradient></defs>
        <rect width="30" height="30" fill="#1c1d20" />
        <path d="M15 6c4 0 5 7 9 17-3 2-4-8-9-8s-6 10-9 8c4-10 5-17 9-17Z" fill="url(#arc)" />
      </>
    ),
  },
  {
    name: 'Docker',
    running: true,
    art: (
      <>
        <circle cx="15" cy="15" r="15" fill="#1d8be6" />
        <path d="M5 15h16c1-2 1-3 0-5 2 1 3 2 3 4l3 1c-1 2-3 2-4 2-2 5-6 7-10 7-5 0-8-3-8-9Z" fill="#fff" />
        <path d="M7 12h3v2H7ZM11 12h3v2h-3ZM15 12h3v2h-3ZM11 9h3v2h-3ZM15 9h3v2h-3ZM15 6h3v2h-3Z" fill="#fff" />
      </>
    ),
  },
  {
    name: 'WhatsApp',
    running: true,
    badge: '46',
    art: (
      <>
        <path d="M2 28 4 21A13 13 0 1 1 10 26Z" fill="#e8f5ec" stroke="#1c9a54" strokeWidth="3" />
        <path d="M11 9c-3 2-1 7 2 10s8 4 9 1l-3-3-2 1c-2-1-3-2-4-4l1-2Z" fill="#1c9a54" />
      </>
    ),
  },
  {
    name: 'JustSnap',
    running: true,
    art: (
      <>
        <defs>
          <linearGradient id="snap" x1="0" y1="0" x2="1" y2="1"><stop stopColor="#2cc4e0" /><stop offset=".5" stopColor="#7c66e8" /><stop offset="1" stopColor="#ee2f5e" /></linearGradient>
          <radialGradient id="glow"><stop stopColor="#ffe98a" /><stop offset="1" stopColor="#ffe98a" stopOpacity="0" /></radialGradient>
        </defs>
        <path d="M2 12V4q0-2 2-2h13v10H7M21 2h5q2 0 2 2v8h-7M28 17v9q0 2-2 2H12V17h7v5M2 17v9q0 2 2 2h5" fill="none" stroke="url(#snap)" strokeWidth="3" />
        <circle cx="15" cy="15" r="10" fill="url(#glow)" />
      </>
    ),
  },
]

function AppIcon({ name, art, running, badge, photo }) {
  return (
    <button aria-label={name} className="relative flex w-[55px] flex-col items-center pt-[14px]">
      <svg viewBox="0 0 30 30" className="size-[30px]">{art}</svg>
      {running && <span className="mt-[6px] h-1 w-2 rounded-full bg-[#858585]" />}
      {badge && <span className="absolute top-[7px] right-[5px] flex size-6 items-center justify-center rounded-full bg-[#0078d4] text-sm text-white">{badge}</span>}
      {photo && <span className="absolute top-2 right-1"><SkyPhoto className="size-5" /></span>}
    </button>
  )
}

function Taskbar() {
  return (
    <footer className="flex h-[59px] shrink-0 border-t-2 border-[#c4c4c4] bg-[#eeeeee] text-sm text-[#1b1b1b]">
      <button className="flex w-[200px] items-center gap-[9px] pb-[2px] pl-6 text-left leading-5">
        <svg viewBox="0 0 30 26" className="size-[30px]">
          <defs><linearGradient id="cloud" x1="0" y1="0" x2="0" y2="1"><stop stopColor="#c3d6f8" /><stop offset="1" stopColor="#9db5e6" /></linearGradient></defs>
          <circle cx="21" cy="8" r="8" fill="#f5a623" />
          <path d="M7 25a6 6 0 0 1-1-12 9 9 0 0 1 17 0 6 6 0 0 1 0 12Z" fill="url(#cloud)" stroke="#7f9bdc" />
        </svg>
        <span>
          31°C
          <span className="block text-[#5c5c5c]">Mostly cloudy</span>
        </span>
      </button>
      <div className="flex flex-1 justify-center pl-[174px]">
        <button aria-label="Start" className="mr-4 pt-[1px]">
          <svg viewBox="0 0 30 30" className="size-[30px]">
            <defs><linearGradient id="win" x1="0" y1="0" x2="1" y2="1"><stop stopColor="#55d0f5" /><stop offset="1" stopColor="#0669c0" /></linearGradient></defs>
            <path d="M0 0h14v14H0ZM16 0h14v14H16ZM0 16h14v14H0ZM16 16h14v14H16Z" fill="url(#win)" />
          </svg>
        </button>
        <label className="mt-2 flex h-10 w-[273px] items-center rounded-full border border-[#d0d0d0] bg-[#f9f9f9] pl-[14px]">
          <svg viewBox="0 0 20 20" className="size-5" fill="none" stroke="#1b1b1b" strokeWidth="2"><circle cx="8" cy="8" r="6" /><path d="m12 13 5 6" strokeWidth="3" /></svg>
          <input aria-label="Search" placeholder="Search" className="ml-[11px] w-40 bg-transparent text-[17px] outline-none placeholder:text-[#5c5c5c]" />
        </label>
        <div className="ml-[5px] flex">
          {apps.map((app) => (
            <AppIcon key={app.name} {...app} />
          ))}
        </div>
      </div>
      <div className="flex items-center pr-6 pb-[2px]">
        <button aria-label="Hidden icons">
          <svg viewBox="0 0 14 8" className="w-[14px]" fill="none" stroke="currentColor" strokeWidth="2"><path d="m1 7 6-6 6 6" /></svg>
        </button>
        <button aria-label="OneDrive" className="ml-[22px]">
          <svg viewBox="0 0 22 18" className="w-[22px]" fill="none" stroke="#333" strokeWidth="1.500"><path d="M6 15a4 4 0 0 1-1-8 7 7 0 0 1 12 0 4 4 0 0 1 0 8Z" fill="#b5b5b5" /><path d="m3 1 17 16" strokeWidth="2" /></svg>
        </button>
        <button className="ml-6 text-center leading-5">ENG<br />US</button>
        <button aria-label="Network, volume and battery" className="ml-[22px] flex items-center gap-[10px]">
          <svg viewBox="0 0 20 16" className="w-5" fill="none" stroke="currentColor" strokeWidth="1.500"><path d="M1 6a13 13 0 0 1 18 0M4 9a9 9 0 0 1 12 0M6 12a5 5 0 0 1 8 0" /><circle cx="10" cy="14" r="1" fill="currentColor" /></svg>
          <svg viewBox="0 0 20 16" className="w-5" fill="none" stroke="currentColor" strokeWidth="1.500"><path d="M1 5h3l4-4v14l-4-4H1ZM11 5q2 3 0 6" /><path d="M14 3q4 5 0 10M16 1q5 7 0 14" stroke="#aaa" /></svg>
          <svg viewBox="0 0 26 18" className="w-[26px]" fill="none" stroke="currentColor" strokeWidth="1.500"><rect x="1" y="4" width="22" height="12" rx="4" /><rect x="3" y="6" width="18" height="8" rx="2" fill="#128a12" stroke="none" /><path d="M25 8v4" /><path d="m13 0-4 7h3l-1 5 5-7h-3Z" fill="currentColor" stroke="none" /></svg>
        </button>
        <button className="ml-[21px] text-right leading-5">5:08 PM<br />29/1/2026</button>
        <button aria-label="Notifications" className="ml-[11px]">
          <svg viewBox="0 0 18 20" className="w-[18px]"><path d="M2 15V8c0-4 3-6 7-6l2 5h4v8l1 2H0ZM6 18h5l-2 2Z" fill="#1b1b1b" /><path d="M13 1h3l-3 4h3" fill="none" stroke="#1b1b1b" strokeWidth="1.500" /><path d="M6 8h4l-4 5h4" fill="none" stroke="#eee" strokeWidth="1.500" /></svg>
        </button>
      </div>
    </footer>
  )
}

/* ---------- capture overlay ---------- */

function CaptureBar() {
  const idle = 'flex h-[51px] items-center justify-center gap-3 bg-[#f8fafc] font-semibold text-[#374151]'
  return (
    <div className="absolute inset-x-0 top-7 flex flex-col items-center gap-5 text-[19px]">
      <div className="flex h-[70px] items-center gap-2 bg-white pr-[9px] pl-[7px] shadow-[0_25px_50px_rgba(0,0,0,0.25)]">
        <button className="flex h-[53px] w-[156px] items-center justify-center gap-3 bg-[#3b82f6] font-semibold text-white shadow-md">
          <svg viewBox="0 0 22 22" className="size-[22px]">
            <path d="M1 8h5l2-3h7l2 3h4v13H1Z" fill="#8a8580" /><path d="M1 11h20v8H1Z" fill="#4b4658" />
            <circle cx="11" cy="14" r="6" fill="#b9b4c4" /><circle cx="11" cy="14" r="4" fill="#3b3450" /><circle cx="10" cy="13" r="1" fill="#b9b4c4" />
            <path d="m5 1 1 3 3 1-3 1-1 4-1-4-3-1 3-1Z" fill="#ffd23f" />
          </svg>
          <span className="pt-[2px]">Capture</span>
        </button>
        <button className={`${idle} w-[156px]`}>
          <svg viewBox="0 0 22 22" className="size-[22px]">
            <path d="M3 1h13q2 0 2 3v14h-4V20H6V5H2Z" fill="#f6b26b" /><path d="M1 1h4v3H2Z" fill="#b84f2a" /><path d="M6 18h14q0 4-3 4H8q-2 0-2-4Z" fill="#f2a65a" />
            <path d="M8 7h7M8 10h7M8 13h7M8 16h4" stroke="#c1622e" />
          </svg>
          <span className="pt-[2px]">Scrolling</span>
        </button>
        <button className={`${idle} w-[143px]`}>
          <svg viewBox="0 0 22 22" className="size-[22px]">
            <circle cx="6" cy="5" r="4" fill="#3f2f4a" /><circle cx="14" cy="5" r="4" fill="#3f2f4a" /><path d="M2 10h15v11H2ZM17 13l5-2v10l-5-2Z" fill="#3f2f4a" />
            <circle cx="6" cy="5" r="1" fill="#9186a0" /><circle cx="14" cy="5" r="1" fill="#9186a0" /><path d="M5 13h9v4H5Z" fill="#7d6c8f" /><circle cx="7" cy="15" r="1" fill="#ff5fa2" /><circle cx="12" cy="15" r="1" fill="#ff5fa2" />
          </svg>
          <span className="pt-[2px]">Record</span>
        </button>
        <button disabled className={`${idle} w-[115px] opacity-50`}>
          <svg viewBox="0 0 22 22" className="size-[22px]">
            <path d="M2 11q8-14 17-2 1 9-8 10-7 0-9-8Z" fill="#e3dee8" stroke="#b9b0c0" /><circle cx="12" cy="10" r="6" fill="#a4564a" /><circle cx="12" cy="10" r="3" fill="#2b1a1c" /><circle cx="10" cy="8" r="1" fill="#fff" />
          </svg>
          <span className="pt-[2px]">Live</span>
        </button>
      </div>
      <p className="bg-black/60 px-[18px] pt-[9px] pb-[7px] text-[17px] leading-[29px] text-white/95">Click and drag to select area • Press ESC to cancel</p>
    </div>
  )
}

export default function App() {
  return (
    <div className="relative flex h-screen flex-col overflow-hidden bg-white font-['Open_Sans',sans-serif] text-[#1f2328]">
      <TabStrip />
      <AddressBar />
      <BookmarksBar />
      <div className="flex min-h-0 flex-1 overflow-hidden">
        <div className="min-w-0 flex-1 overflow-hidden">
          <RepoHeader />
          <div className="mx-auto max-w-[1760px] px-11">
            <TitleRow />
            <main className="mt-[33px] flex gap-[33px]">
              <div className="min-w-0 flex-1">
                <FileToolbar />
                <FileList />
              </div>
              <Sidebar />
            </main>
          </div>
        </div>
        <Scrollbar />
      </div>
      <Taskbar />
      <CaptureBar />
      <div className="pointer-events-none absolute inset-0 bg-black/40" />
      {/* current selection */}
      <div className="pointer-events-none absolute top-4 left-[656px] h-36 w-[630px] border-x border-y-2 border-[#ee2020]/80" />
    </div>
  )
}
